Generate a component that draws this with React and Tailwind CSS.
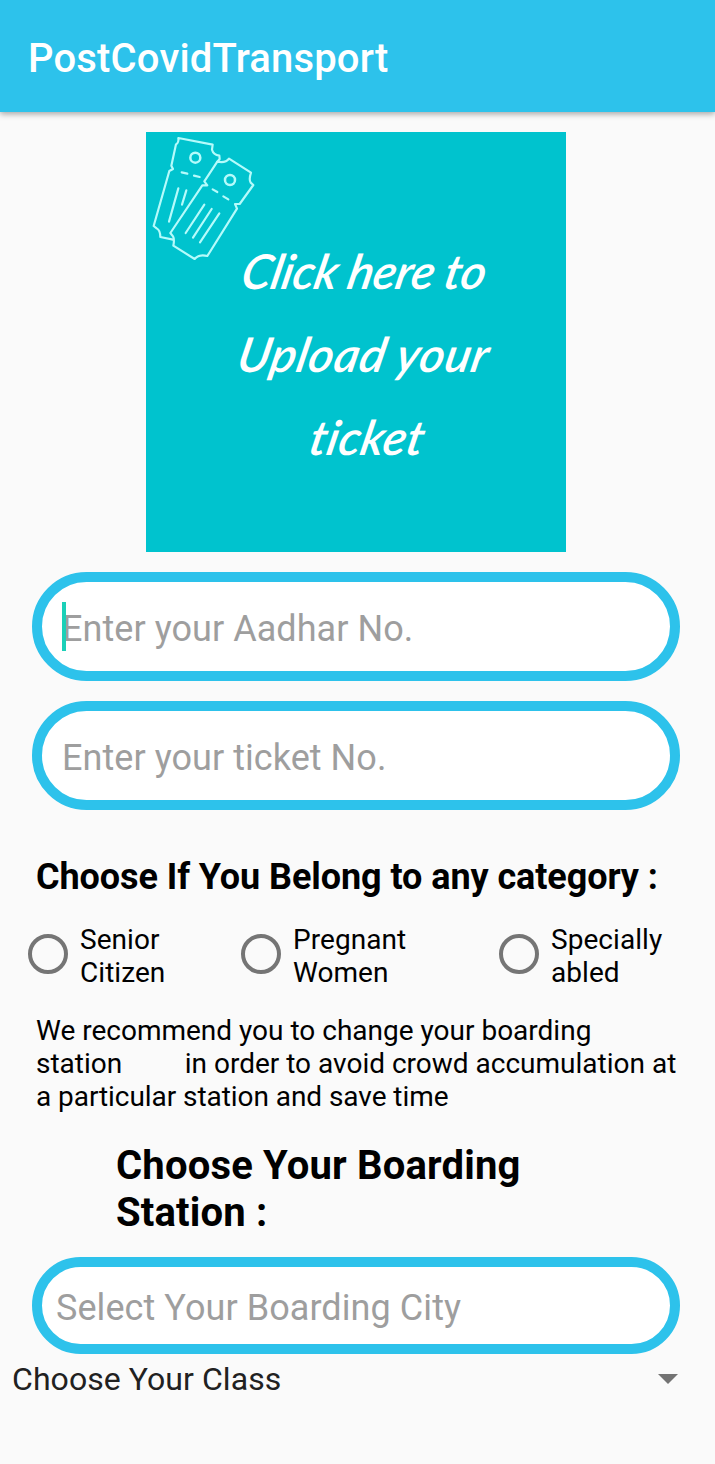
function TicketsIcon() {
  return (
    <svg className="absolute left-0 top-0" width="124" height="138" viewBox="18 21 372 414" fill="none" stroke="#b5fbfb" strokeWidth="6.5" strokeLinecap="round" strokeLinejoin="round">
      <path d="M232 110 L239 102 L238 92 Q220 89 216 74 L218 59 L115 39 Q117 53 108 58 L94 122 L99 132 L88 138 L41 303 L50 310 Q61 316 61 336 L99 344" />
      <path d="M232 110 Q257 115 267 101 L333 143 Q326 164 332 173 L340 180 L299 237 L285 237 L291 251 L202 393 Q178 386 164 402 L100 362 Q104 343 99 334 L91 324 L187 181 L202 181 L193 169 Z" />
      <circle cx="166" cy="98" r="15" strokeWidth="7.5" />
      <circle cx="270" cy="165" r="15" strokeWidth="7.5" />
      <path d="M125 142 L142 146 M162 152 L179 156 M218 193 L232 201 M250 214 L265 223" />
      <path d="M115 190 L87 290 M139 196 L126 239 M193 239 L137 324 M215 252 L159 338 M238 265 L180 352" />
    </svg>
  );
}

function UploadCard() {
  return (
    <button className="relative mt-5 ml-[146px] flex h-[420px] w-[420px] items-start justify-center overflow-hidden bg-[#00c3ce] text-white">
      <TicketsIcon />
      <span className="flex flex-col items-center pt-[97px] pl-[18px] font-['Lato','Open_Sans',sans-serif] text-[48px] leading-[83px] font-semibold italic">
        <span className="-skew-x-12 whitespace-nowrap tracking-[-0.4px]">Click here to</span>
        <span className="-skew-x-12 whitespace-nowrap tracking-[0.6px]">Upload your</span>
        <span className="-skew-x-12 pl-[6px] whitespace-nowrap tracking-[0.2px]">ticket</span>
      </span>
    </button>
  );
}

function Category({ first, second, className }) {
  return (
    <label className={"flex items-center gap-3 " + className}>
      <span className="relative -top-[2px] h-10 w-10 shrink-0 rounded-full border-4 border-[#757575]" />
      <span className="text-[28px] leading-[33px] tracking-[0.05px]">
        {first}
        <br />
        {second}
      </span>
    </label>
  );
}

export default function App() {
  return (
    <div className="h-[1464px] w-[715px] overflow-hidden bg-[#fafafa] font-['Roboto',sans-serif] text-black">
      <header className="flex h-28 items-center bg-[#2dc2eb] pt-[5px] pl-7 shadow-[0_2px_6px_rgba(0,0,0,0.35)]">
        <h1 className="text-[40px] leading-[47px] font-medium tracking-[0.17px] text-white">PostCovidTransport</h1>
      </header>

      <UploadCard />

      <div className="mt-5 ml-8 flex h-[109px] w-[648px] items-center rounded-full border-[10px] border-[#2dc2eb] bg-white pl-5">
        <span className="relative block h-[49px] text-[36px] leading-[55px] tracking-[0.05px] text-[#9e9e9e]">
          Enter your Aadhar No.
          <span className="absolute top-0 left-0 h-[49px] w-1 bg-[#1bd0b8]" />
        </span>
      </div>
      <div className="mt-5 ml-8 flex h-[109px] w-[648px] items-center rounded-full border-[10px] border-[#2dc2eb] bg-white pl-5">
        <span className="block h-[49px] text-[36px] leading-[55px] tracking-[0.05px] text-[#9e9e9e]">Enter your ticket No.</span>
      </div>

      <h2 className="mt-[46px] ml-9 text-[36px] leading-[42px] font-bold tracking-[-0.08px] whitespace-nowrap">Choose If You Belong to any category :</h2>

      <div className="mt-[25px] flex pl-7">
        <Category first="Senior" second="Citizen" className="w-[213px]" />
        <Category first="Pregnant" second="Women" className="w-[258px]" />
        <Category first="Specially" second="abled" className="" />
      </div>

      <p className="mt-[25px] ml-9 text-[28px] leading-[33px] whitespace-pre">
        We recommend you to change your boarding
        <br />
        {"station         in order to avoid crowd accumulation at"}
        <br />
        <span className="tracking-[-0.06px]">a particular station and save time</span>
      </p>

      <h2 className="mt-[29px] ml-[116px] text-[40px] leading-[47px] font-bold tracking-[0.18px]">
        Choose Your Boarding
        <br />
        Station :
      </h2>

      <div className="mt-[21px] ml-8 flex h-[97px] w-[648px] items-center rounded-full border-[10px] border-[#2dc2eb] bg-white pt-1 pl-[14px]">
        <span className="text-[36px] leading-[42px] tracking-[0.07px] text-[#9e9e9e]">Select Your Boarding City</span>
      </div>

      <div className="mt-[6px] flex items-center justify-between pr-[37px] pl-3">
        <span className="text-[32px] leading-[38px] tracking-[0.06px] text-[#212121]">Choose Your Class</span>
        <svg width="20" height="10" viewBox="0 0 20 10" fill="#737373">
          <path d="M0 0 H20 L10 10 Z" />
        </svg>
      </div>
    </div>
  );
}
